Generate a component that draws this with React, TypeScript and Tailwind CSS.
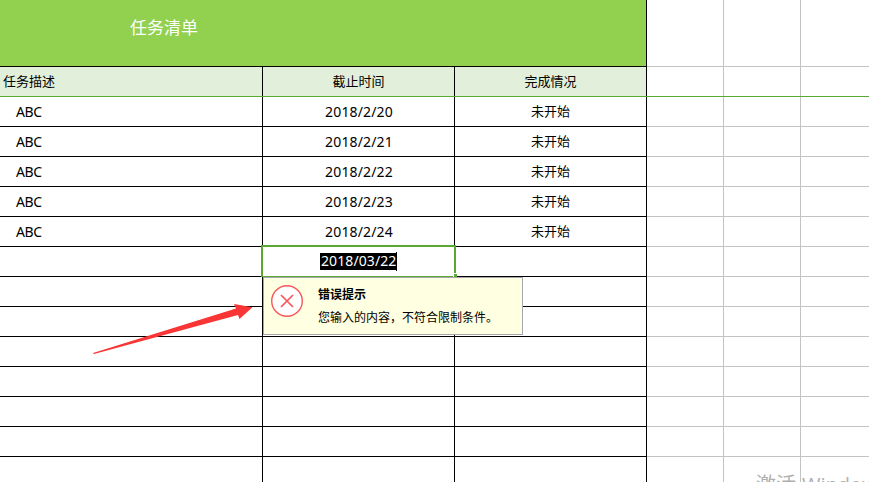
import React from 'react';

const dates = ['2018/2/20', '2018/2/21', '2018/2/22', '2018/2/23', '2018/2/24'];
const rows = Array.from({ length: 13 }, (_, i) => dates[i] ?? '');

function GridCells({ line }: { line: string }) {
  return (
    <>
      <div className={`w-[77px] shrink-0 border-r border-r-[#c3c3c3] border-b ${line}`} />
      <div className={`w-[77px] shrink-0 border-r border-r-[#c3c3c3] border-b ${line}`} />
      <div className={`flex-1 border-b ${line}`} />
    </>
  );
}

function ErrorTip() {
  return (
    <div className="absolute top-[30px] left-0 z-20 flex h-[58px] w-[260px] border border-[#a6a6ae] bg-[#ffffe1] tracking-normal text-black">
      <svg className="mt-[6px] ml-[6px] h-[34px] w-[34px] shrink-0" viewBox="0 0 34 34" fill="none" stroke="#f8575a">
        <circle cx="17" cy="17" r="15.3" fill="#fff" strokeWidth="1.4" />
        <path d="M11 11l12 12M23 11L11 23" strokeWidth="1.7" />
      </svg>
      <div className="ml-[14px] pt-[7px] text-[12px] leading-[20px] whitespace-nowrap">
        <div className="font-bold">错误提示</div>
        <div className="mt-[3px]">您输入的内容，不符合限制条件。</div>
      </div>
    </div>
  );
}

function ActiveCell() {
  return (
    <>
      <div className="absolute -top-[2px] -left-[2px] z-10 h-8 w-[195px] border-2 border-b-1 border-[#5aa832]" />
      <div className="absolute top-[26px] left-[190px] z-30 h-1 w-1 border-t border-l border-white bg-[#5aa832]" />
      <div className="mt-[5px] flex h-[19px] items-end border-r border-black">
        <span className="mb-px block h-[17px] w-[76px] bg-black pl-px text-[14px] leading-[15px] tracking-[0.1px] text-white">2018/03/22</span>
      </div>
      <ErrorTip />
    </>
  );
}

export default function App() {
  return (
    <div className="relative h-[482px] w-[869px] overflow-hidden bg-white font-['Noto_Sans','Noto_Sans_CJK_SC',sans-serif] text-[13px] text-black">
      <div className="flex h-[67px]">
        <div className="w-[647px] shrink-0 border-r border-b border-black bg-[#92d050] pt-[15px] pl-[130px] text-[17px] leading-[26px] text-white">
          任务清单
        </div>
        <GridCells line="border-b-[#c3c3c3]" />
      </div>
      <div className="relative flex h-[30px] leading-[29px]">
        <div className="w-[263px] shrink-0 border-r border-black bg-[#e2efda] pl-[3px]">任务描述</div>
        <div className="w-[192px] shrink-0 border-r border-black bg-[#e2efda] text-center">截止时间</div>
        <div className="w-[192px] shrink-0 border-r border-black bg-[#e2efda] text-center">完成情况</div>
        <GridCells line="border-b-transparent" />
        <div className="absolute bottom-0 left-0 h-px w-full bg-[#5aa832]" />
      </div>
      {rows.map((date, i) => (
        <div key={i} className="flex h-[30px] leading-[30px]">
          <div className="w-[263px] shrink-0 border-r border-b border-black pl-4 text-[14px] tracking-[-0.4px]">{date && 'ABC'}</div>
          <div className="relative flex w-[192px] shrink-0 items-start justify-center border-r border-b border-black text-[14px] tracking-[0.15px]">
            {i === 5 ? <ActiveCell /> : <span className="pl-px">{date}</span>}
          </div>
          <div className="w-[192px] shrink-0 border-r border-b border-black text-center leading-[29px]">{date && '未开始'}</div>
          <GridCells line="border-b-[#c3c3c3]" />
        </div>
      ))}
      <svg className="absolute top-[296px] left-[90px] z-10 h-[62px] w-[166px]" viewBox="90 296 166 62">
        <path d="M93 353L236 308.5L234 304L252.5 307.2L239.5 319L238 315L94 354Z" fill="#fa3535" />
      </svg>
      <div className="absolute top-[471px] left-[756px] flex text-[20px] leading-[28px] whitespace-nowrap text-[#b0b0b0]">
        <span>激活</span>
        <span className="ml-[6px] font-['Open_Sans',sans-serif]">Windows</span>
      </div>
    </div>
  );
}
